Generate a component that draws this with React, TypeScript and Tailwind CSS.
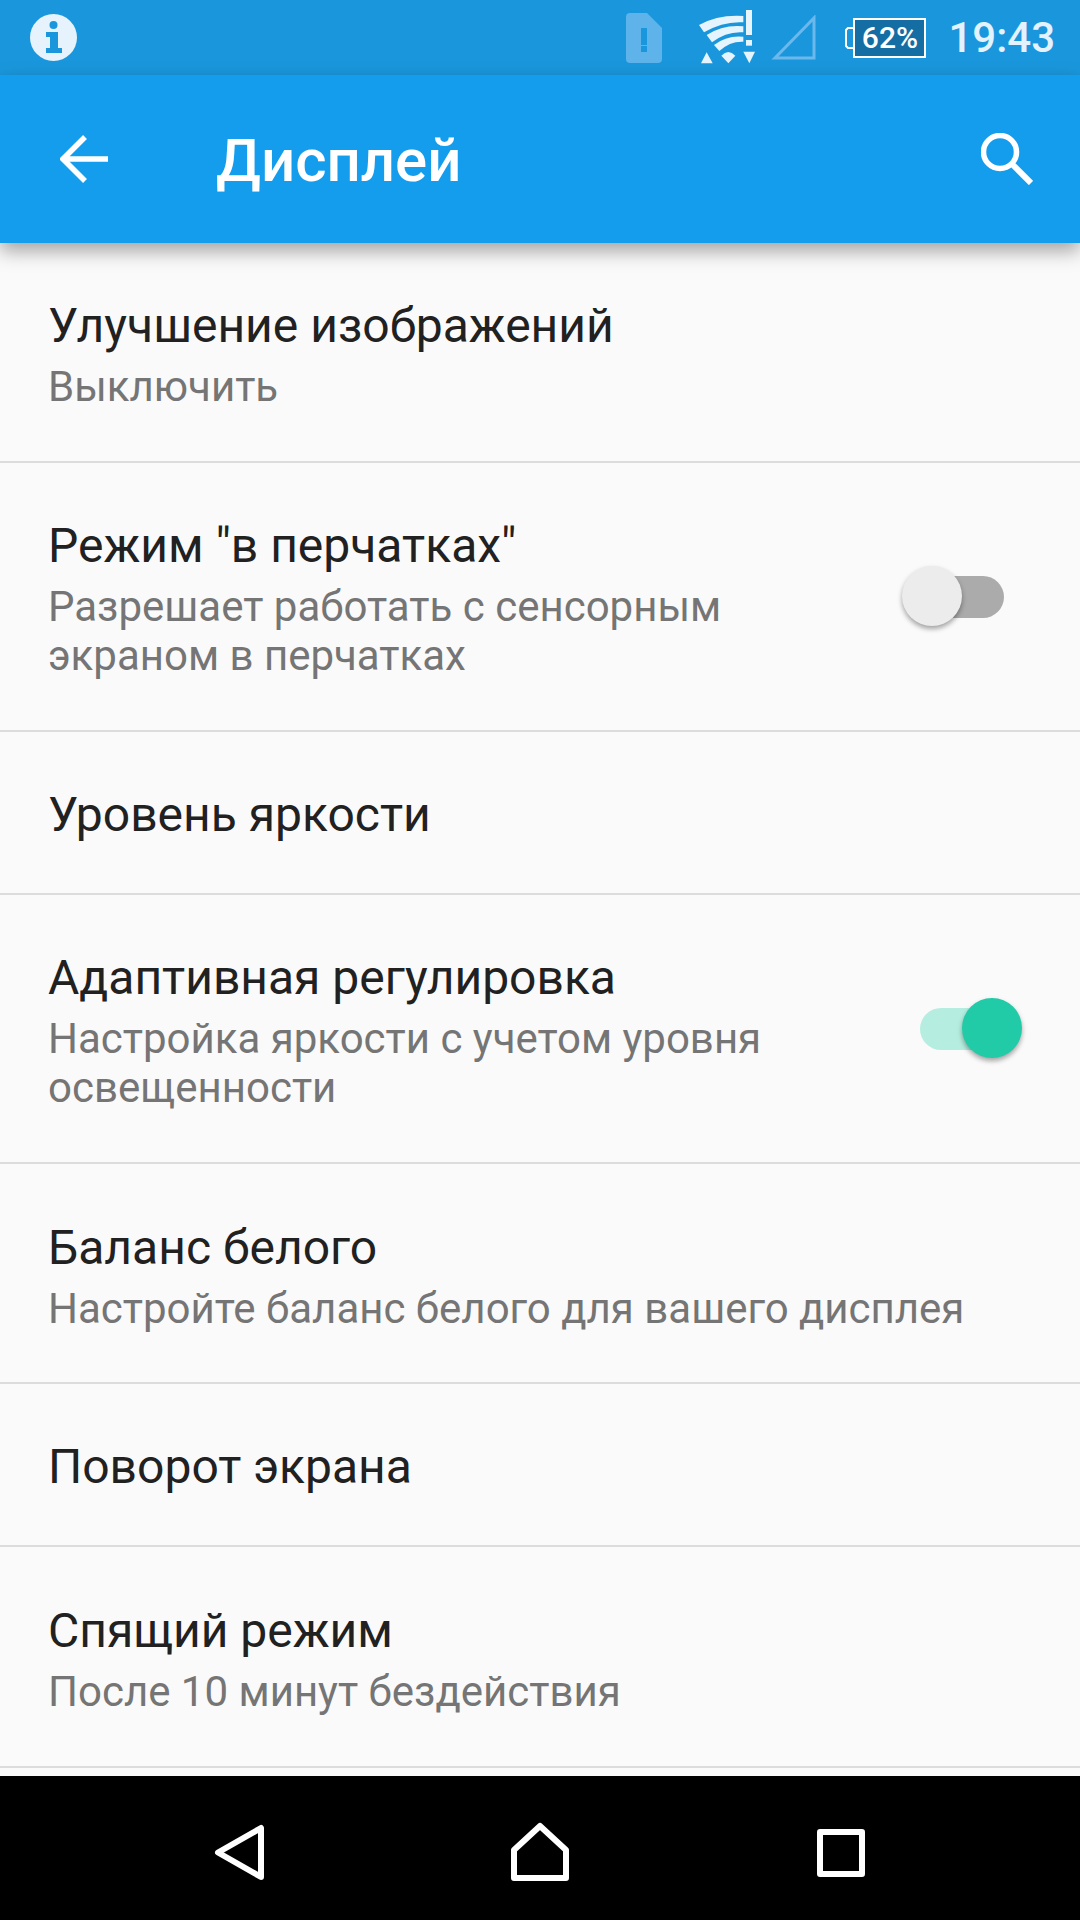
const rows = [
  { title: "Улучшение изображений", sub: ["Выключить"], height: "h-[220px]", top: "pt-[47px]" },
  { title: 'Режим "в перчатках"', sub: ["Разрешает работать с сенсорным", "экраном в перчатках"], height: "h-[269px]", top: "pt-[47px]", toggle: "off" },
  { title: "Уровень яркости", sub: [], height: "h-[163px]", top: "pt-[47px]" },
  { title: "Адаптивная регулировка", sub: ["Настройка яркости с учетом уровня", "освещенности"], height: "h-[269px]", top: "pt-[47px]", toggle: "on" },
  { title: "Баланс белого", sub: ["Настройте баланс белого для вашего дисплея"], height: "h-[220px]", top: "pt-[48px]" },
  { title: "Поворот экрана", sub: [], height: "h-[163px]", top: "pt-[47px]" },
  { title: "Спящий режим", sub: ["После 10 минут бездействия"], height: "h-[221px]", top: "pt-[48px]" },
];

function Toggle({ on }: { on: boolean }) {
  return (
    <div className="relative h-[60px] w-[120px] shrink-0">
      <div
        className={`absolute left-[18px] right-[18px] top-[10px] h-[42px] rounded-full ${
          on ? "bg-[#b5eee0]" : "bg-[#ababab]"
        }`}
      />
      <div
        className={`absolute top-0 h-[60px] w-[60px] rounded-full shadow-[0_3px_5px_rgba(0,0,0,0.35)] ${
          on ? "right-0 bg-[#21cba8]" : "left-0 bg-[#ececec]"
        }`}
      />
    </div>
  );
}

function StatusIcons() {
  return (
    <div className="flex items-center">
      {/* sim */}
      <svg width="36" height="50" viewBox="0 0 36 50" className="mr-[28px]">
        <path d="M4 0H21L36 15V46a4 4 0 0 1-4 4H4a4 4 0 0 1-4-4V4a4 4 0 0 1 4-4Z" fill="#5db3ea" />
        <rect x="15" y="15" width="6" height="17" fill="#1a97dc" />
        <rect x="15" y="33" width="6" height="6" fill="#1a97dc" />
      </svg>
      {/* wifi */}
      <svg width="80" height="65" viewBox="0 0 240 195" className="mr-[1px]" fill="#e6f4fd">
        <path d="M27 60Q85 28 160 33V52Q100 48 42 82Z" />
        <path d="M50 90Q100 58 160 64V82Q110 78 66 112Z" />
        <path d="M72 120Q110 90 160 95V110Q120 108 88 138Z" />
        <path d="M94 152Q115 130 136 152L115 175Z" />
        <path d="M33 175L50 142L68 175Z" />
        <rect x="168" y="15" width="18" height="75" />
        <rect x="168" y="105" width="18" height="17" />
        <path d="M160 140H195L178 175Z" />
      </svg>
      {/* signal */}
      <svg width="45" height="45" viewBox="0 0 45 45" className="mr-[29px]">
        <path d="M43 3V43H4Z" fill="none" stroke="#6bb9ec" strokeWidth="3" />
      </svg>
      {/* battery */}
      <div className="mr-[22px] flex items-center">
        <svg width="8" height="22" viewBox="0 0 8 22">
          <path d="M8 1H3L1 3V19L3 21H8" fill="none" stroke="#fff" strokeWidth="2" />
        </svg>
        <div className="flex h-[40px] w-[73px] items-center justify-center border-2 border-white bg-[#146ea4] text-[30px] font-medium leading-none text-white">
          62%
        </div>
      </div>
      <span className="text-[42px] font-medium leading-none text-[#e3f2fc]">19:43</span>
    </div>
  );
}

export default function App() {
  return (
    <div className="flex h-[1920px] w-[1080px] flex-col overflow-hidden bg-[#fafafa] font-['Roboto',sans-serif]">
      {/* Status bar */}
      <div className="flex h-[75px] shrink-0 items-center justify-between bg-[#1a97dc] pl-[30px] pr-[25px]">
        <svg width="47" height="47" viewBox="0 0 47 47">
          <circle cx="23.5" cy="23.5" r="23.5" fill="#e6f3fc" />
          <circle cx="23.5" cy="11" r="4" fill="#1a97dc" />
          <path d="M16 18H28V34H32V39H16V34H20V23H16Z" fill="#1a97dc" />
        </svg>
        <StatusIcons />
      </div>

      {/* App bar */}
      <div className="relative z-10 flex h-[168px] shrink-0 items-center bg-[#159ded] shadow-[0_8px_18px_rgba(0,0,0,0.35)]">
        <svg width="48" height="48" viewBox="0 0 48 48" className="ml-[60px]">
          <path d="M48 24H3M25 2L3 24L25 46" fill="none" stroke="#fff" strokeWidth="5.5" />
        </svg>
        <span className="ml-[108px] mt-[3px] flex-1 text-[60px] font-medium leading-none text-white">Дисплей</span>
        <svg width="52" height="52" viewBox="0 0 52 52" className="mr-[47px]">
          <circle cx="19" cy="19" r="16.5" fill="none" stroke="#fff" strokeWidth="5.5" />
          <path d="M31 31L50 50" fill="none" stroke="#fff" strokeWidth="6" />
        </svg>
      </div>

      {/* Settings list */}
      <div className="flex-1 overflow-hidden">
        {rows.map((row) => (
          <div
            key={row.title}
            className={`flex items-start justify-between border-b-2 border-[#dcdcdc] pl-[48px] pr-[58px] ${row.height} ${row.top}`}
          >
            <div>
              <div className="text-[48px] leading-[72px] text-[#212121]">{row.title}</div>
              {row.sub.map((line) => (
                <div key={line} className="text-[42px] leading-[49px] text-[#757575]">
                  {line}
                </div>
              ))}
            </div>
            {row.toggle && (
              <div className="mt-[56px]">
                <Toggle on={row.toggle === "on"} />
              </div>
            )}
          </div>
        ))}
      </div>

      {/* Nav bar */}
      <div className="flex h-[144px] shrink-0 items-center justify-center bg-black pt-[10px]">
        <div className="flex w-[300px] justify-center">
          <svg width="52" height="58" viewBox="0 0 52 58">
            <path d="M47 4V53L4 28.5Z" fill="none" stroke="#fff" strokeWidth="6" strokeLinejoin="round" />
          </svg>
        </div>
        <div className="flex w-[300px] justify-center">
          <svg width="60" height="60" viewBox="0 0 60 60" className="mb-[3px]">
            <path d="M4 28L30 4L56 28V56H4Z" fill="none" stroke="#fff" strokeWidth="6" strokeLinejoin="round" />
          </svg>
        </div>
        <div className="flex w-[300px] justify-center">
          <svg width="48" height="48" viewBox="0 0 48 48" className="ml-[2px]">
            <rect x="3" y="3" width="42" height="42" fill="none" stroke="#fff" strokeWidth="6" strokeLinejoin="round" />
          </svg>
        </div>
      </div>
    </div>
  );
}
